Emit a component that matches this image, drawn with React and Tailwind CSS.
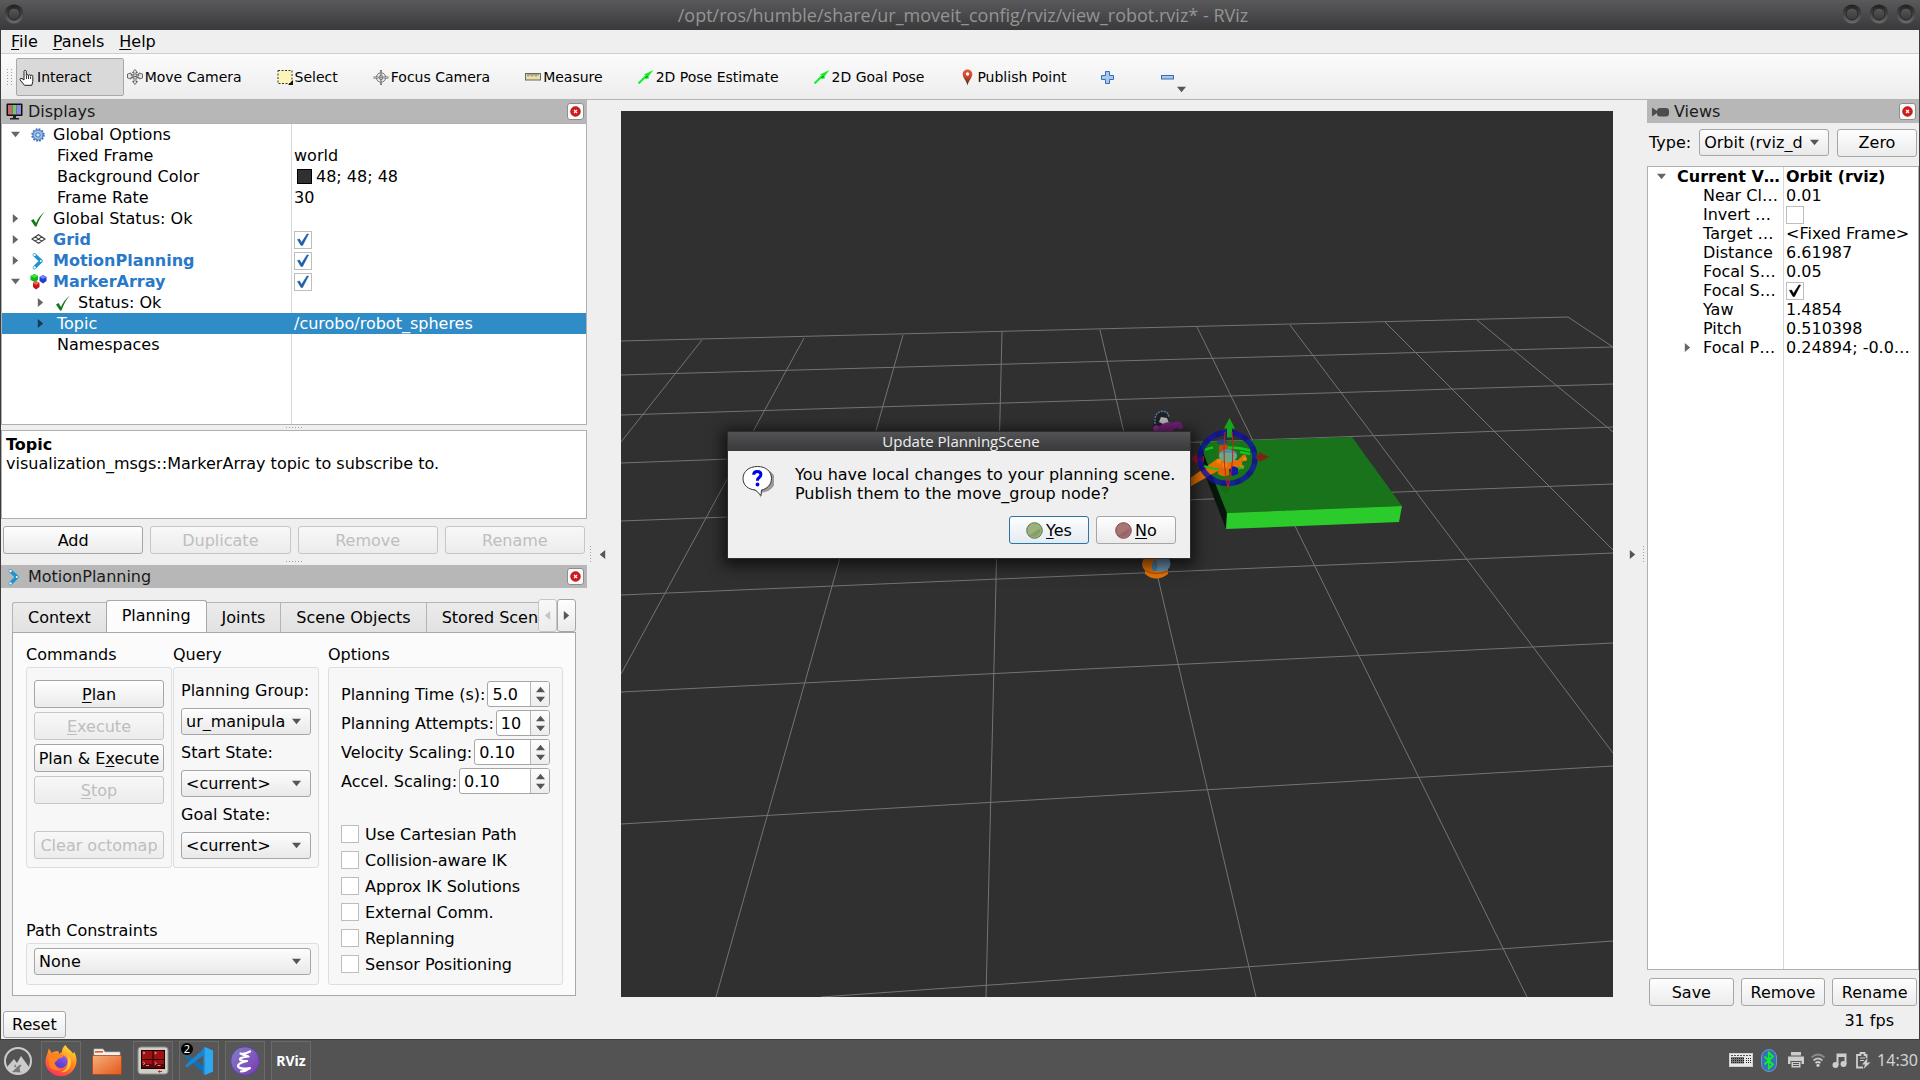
import React from "react";

const BTN =
  "flex items-center justify-center rounded-[3px] border border-[#a6a6a6] bg-linear-to-b from-[#fefefe] to-[#ebebeb] text-black whitespace-nowrap disabled:border-[#c6c6c6] disabled:from-[#f8f8f8] disabled:to-[#ececec] disabled:text-[#bebebe]";

/* ---------- small drawing helpers ---------- */

function Tri({ dir = "down", color = "#555", size = 9 }) {
  const pts = {
    down: "0,2 10,2 5,8",
    up: "0,8 10,8 5,2",
    right: "2,0 8,5 2,10",
    left: "8,0 2,5 8,10",
  }[dir];
  return (
    <svg width={size} height={size} viewBox="0 0 10 10" className="shrink-0">
      <polygon points={pts} fill={color} />
    </svg>
  );
}

function Dots({ vertical }) {
  return (
    <svg width={vertical ? 3 : 17} height={vertical ? 17 : 3}>
      {[0, 3, 6, 9, 12, 15].map((p) => (
        <rect key={p} x={vertical ? 1 : p} y={vertical ? p : 1} width="1" height="1" fill="#a0a0a0" />
      ))}
    </svg>
  );
}

const CheckMark = () => (
  <svg width="16" height="16" viewBox="0 0 16 16">
    <path d="M1 9.500 3.500 8l2.500 4Q9 5 15 0.500q-5.500 6-8.500 15H5Z" fill="#147a1a" />
  </svg>
);

const Gear = () => (
  <svg width="14" height="14" viewBox="0 0 14 14">
    <circle cx="7" cy="7" r="5.700" fill="#8fb4e3" stroke="#3d6fb5" strokeWidth="2" strokeDasharray="1.700 1.280" />
    <circle cx="7" cy="7" r="4.800" fill="#9dbfea" stroke="#4576ba" strokeWidth="0.700" />
    <circle cx="7" cy="7" r="2.200" fill="#d5e4f7" stroke="#3d6fb5" />
  </svg>
);

const GridIcon = () => (
  <svg width="15" height="15" viewBox="0 0 15 15" fill="none" stroke="#3c3c3c" strokeWidth="1.100">
    <path d="M1 7 7.500 2.700 14 7 7.500 11.300Z M4.200 4.900 10.800 9.100 M10.800 4.900 4.200 9.100" />
  </svg>
);

const Arm = () => (
  <svg width="16" height="18" viewBox="0 0 16 18">
    <path d="M4.500 3 11 9 4.500 15.500" fill="none" stroke="#1d93d2" strokeWidth="3.600" strokeLinecap="round" strokeLinejoin="round" />
    <g fill="#fff">
      <circle cx="4.500" cy="3" r="1.200" />
      <circle cx="10.800" cy="9" r="1" />
      <circle cx="4.500" cy="15.400" r="1.200" />
    </g>
  </svg>
);

const Markers = () => (
  <svg width="17" height="17" viewBox="0 0 17 17">
    <path d="M0.500 3 4.500 1l3.500 2v4L4.500 9 0.500 7Z" fill="#12b812" />
    <path d="m0.500 3 4-2 3.500 2-3.500 2Z" fill="#39e639" />
    <path d="m9.500 4 3.500-2 3.500 2v4L13 10.500 9.500 8Z" fill="#1e3fd0" />
    <path d="m9.500 4 3.500-2 3.500 2-3.500 2Z" fill="#6f8dff" />
    <path d="m3 10 3-2 3.500 2v4L6 16.500 3 14Z" fill="#c81414" />
    <path d="m3 10 3-2 3.500 2L6 12Z" fill="#f06060" />
  </svg>
);

const Monitor = () => (
  <svg width="17" height="17" viewBox="0 0 17 17">
    <rect x="0.500" y="0.500" width="16" height="12.500" rx="1" fill="#111" />
    <rect x="2" y="2" width="4.500" height="9.500" fill="#c56a6a" />
    <rect x="6.500" y="2" width="4" height="9.500" fill="#79c479" />
    <rect x="10.500" y="2" width="4.500" height="9.500" fill="#8c8ce0" />
    <path d="M7 13h3v2h3v1.500H4V15h3Z" fill="#222" />
  </svg>
);

const CameraIcon = () => (
  <svg width="17" height="10" viewBox="0 0 17 10" fill="#4c4c4c">
    <path d="M0 0.500 5 4V6L0 9.500Z" />
    <rect x="5" y="1" width="12" height="8.500" rx="3" />
  </svg>
);

const Hand = () => (
  <svg width="16" height="17" viewBox="0 0 16 17">
    <path
      d="M5 9V2.200a1.200 1.200 0 0 1 2.300 0V6.500a1 1 0 0 1 2 .2 1 1 0 0 1 2.200.3 1 1 0 0 1 2.300.5v5l-1 3.800H5.500L1 10.800Q1 8.800 3 9.500L5 11Z"
      fill="#fff"
      stroke="#222"
    />
    <path d="M7.500 7v3M9.500 7v3M11.600 7.500V10" stroke="#333" fill="none" />
  </svg>
);

const MoveCam = () => (
  <svg width="16" height="16" viewBox="0 0 16 16" fill="#e2e2e2" stroke="#5c5c5c" strokeWidth="0.900">
    <path d="M8 0.500 5.500 3.500H7V6Q5 5 4 5.500V4L0.500 5v4L4 10V8.500L7 9v3.500H5.500L8 15.500l2.500-3H9V9l3-.5V10l3.500-1V5L12 4v1.500Q11 5 9 6V3.500h1.500Z" />
    <path d="M4 6.500 12 8.500M4 8.500l8-2" fill="none" />
  </svg>
);

const SelectIcon = () => (
  <svg width="16" height="16" viewBox="0 0 16 16">
    <rect x="1" y="1.500" width="14" height="13" fill="#fdf5b8" stroke="#333" strokeDasharray="2 1.500" />
    <path d="M16 11v5h-5Z" fill="#111" />
  </svg>
);

const Focus = () => (
  <svg width="17" height="17" viewBox="0 0 17 17" fill="#eee" stroke="#6a6a6a">
    <circle cx="8.500" cy="8.500" r="5" />
    <path d="M8.500 0.500v5M8.500 11.500v5M0.500 8.500h5M11.500 8.500h5" strokeWidth="2.200" />
    <path d="M8.500 1v5M8.500 11v5M1 8.500h5M11 8.500h5" stroke="#eee" strokeWidth="0.600" />
    <circle cx="8.500" cy="8.500" r="2.200" />
    <path d="M8.500 6v5M6 8.500h5" strokeWidth="0.700" />
  </svg>
);

const Ruler = () => (
  <svg width="16" height="8" viewBox="0 0 16 8">
    <rect x="0.500" y="0.500" width="15" height="6.500" fill="#e9e0a6" stroke="#666" />
    <path d="M3 1v2.500M5 1v1.500M7 1v2.500M9 1v1.500M11 1v2.500M13 1v1.500" stroke="#666" />
  </svg>
);

const PoseArrow = () => (
  <svg width="16" height="14" viewBox="0 0 16 14">
    <path d="M0.500 13.500 8 6" stroke="#14f02a" strokeWidth="2" />
    <path d="M15.500 0 6 4.500l2 1.500-1 3 4-.5-.5-2Z" fill="#14f02a" />
    <path d="M7 7.500 9.500 5.500v2Z" fill="#0a7a12" />
  </svg>
);

const Pin = () => (
  <svg width="11" height="17" viewBox="0 0 11 17">
    <defs>
      <linearGradient id="pin" x1="0" y1="0" x2="0" y2="1">
        <stop offset="0" stopColor="#e8573c" />
        <stop offset="0.450" stopColor="#c7472c" />
        <stop offset="1" stopColor="#3a2c18" />
      </linearGradient>
    </defs>
    <path d="M5.500 0.500c3 0 4.800 2.200 4.800 4.800 0 3.500-3.500 6-4.800 11.200C4.200 11.300.7 8.800.7 5.300.7 2.700 2.500.5 5.500.5Z" fill="url(#pin)" />
    <circle cx="5.500" cy="5" r="1.700" fill="#fff" />
  </svg>
);

const Plus = () => (
  <svg width="13" height="13" viewBox="0 0 13 13">
    <path d="M4.500 0.500h4v4h4v4h-4v4h-4v-4h-4v-4h4Z" fill="#a9c8ee" stroke="#3b6cb3" />
  </svg>
);

const Minus = () => (
  <svg width="13" height="5" viewBox="0 0 13 5">
    <rect x="0.500" y="0.500" width="12" height="3.500" fill="#a9c8ee" stroke="#3b6cb3" />
  </svg>
);

/* ---------- shared controls ---------- */

function DockHeader({ icon, title }) {
  return (
    <header className="flex h-[23px] shrink-0 items-center bg-[#b7b7b7] pr-[3px] pl-[3px] text-[#1a1a1a]">
      <span className="flex w-5 justify-center">{icon}</span>
      <h2 className="ml-1 flex-1">{title}</h2>
      <button
        type="button"
        aria-label={"Close " + title}
        className="flex h-[17px] w-[17px] items-center justify-center rounded-[3px] border border-[#8e8e8e] bg-[#fafafa]"
      >
        <svg width="11" height="11" viewBox="0 0 11 11">
          <circle cx="5.500" cy="5.500" r="5" fill="#d01c1c" />
          <circle cx="5.500" cy="5.500" r="4.800" fill="none" stroke="#a81212" strokeWidth="0.600" />
          <path d="m4 4 3 3M7 4 4 7" stroke="#fff" strokeWidth="1.200" />
        </svg>
      </button>
    </header>
  );
}

function Check({ checked = false, label, color = "#1f5fa6", id }) {
  return (
    <span className="relative inline-flex h-[18px] w-[18px] shrink-0">
      <input
        id={id}
        type="checkbox"
        aria-label={label}
        defaultChecked={checked}
        className="peer h-[18px] w-[18px] appearance-none border border-[#bdbdbd] bg-white"
      />
      <svg
        viewBox="0 0 18 18"
        className="pointer-events-none absolute inset-0 hidden h-[18px] w-[18px] peer-checked:block"
      >
        <path d="m3.500 8.500 2-.5 2 3.500L13 3h1.500L8.500 14.500h-1.500Z" fill={color} stroke={color} strokeWidth="0.600" />
      </svg>
    </span>
  );
}

function Combo({ id, value, label }) {
  return (
    <span className="relative flex min-w-0 flex-1">
      <select
        id={id}
        aria-label={label}
        className="h-[27px] w-full appearance-none rounded-[3px] border border-[#a6a6a6] bg-linear-to-b from-[#fdfdfd] to-[#e9e9e9] pl-1 text-black"
      >
        <option>{value}</option>
      </select>
      <span className="pointer-events-none absolute top-[9px] right-[10px]">
        <Tri />
      </span>
    </span>
  );
}

function Spin({ label, id, value }) {
  return (
    <div className="flex h-[26px] items-center gap-[2px]">
      <label htmlFor={id} className="whitespace-nowrap">
        {label}
      </label>
      <span className="flex h-full min-w-0 flex-1 overflow-hidden rounded-[3px] border border-[#a6a6a6] bg-white">
        <input id={id} defaultValue={value} className="w-0 min-w-0 flex-1 bg-transparent pl-1 outline-none" />
        <span className="flex w-[19px] flex-col items-center justify-center gap-[1px] border-l border-[#b5b5b5] bg-linear-to-b from-[#fdfdfd] to-[#ededed]">
          <button type="button" aria-label={label + " up"} className="flex">
            <Tri dir="up" />
          </button>
          <button type="button" aria-label={label + " down"} className="flex">
            <Tri dir="down" />
          </button>
        </span>
      </span>
    </div>
  );
}

/* ---------- displays dock ---------- */

const DISPLAY_ROWS = [
  { name: "Global Options", arrow: "down", icon: <Gear /> },
  { name: "Fixed Frame", depth: 1, value: "world" },
  { name: "Background Color", depth: 1, value: "48; 48; 48", swatch: true },
  { name: "Frame Rate", depth: 1, value: "30" },
  { name: "Global Status: Ok", arrow: "right", icon: <CheckMark /> },
  { name: "Grid", arrow: "right", icon: <GridIcon />, checked: true },
  { name: "MotionPlanning", arrow: "right", icon: <Arm />, checked: true },
  { name: "MarkerArray", arrow: "down", icon: <Markers />, checked: true },
  { name: "Status: Ok", depth: 1, arrow: "right", icon: <CheckMark /> },
  { name: "Topic", depth: 1, arrow: "right", value: "/curobo/robot_spheres", selected: true },
  { name: "Namespaces", depth: 1 },
];

function DisplaysTree() {
  return (
    <div className="h-[302px] shrink-0 border border-[#b0b0b0] bg-white bg-[linear-gradient(#d8d8d8,#d8d8d8)] bg-[length:1px_100%] bg-[position:289px_0] bg-no-repeat">
      <table className="w-full table-fixed leading-[21px]">
        <colgroup>
          <col className="w-[290px]" />
          <col />
        </colgroup>
        <tbody>
          {DISPLAY_ROWS.map((r) => (
            <tr key={r.name} className={r.selected ? "bg-[#308cc6] text-white" : ""}>
              <td className="p-0">
                <div className={"flex h-[21px] items-center gap-1 " + (r.depth ? "pl-[25px]" : "")}>
                  <span className="flex w-[26px] justify-center">
                    {r.arrow && <Tri dir={r.arrow} color={r.selected ? "#153a52" : "#666"} />}
                  </span>
                  {r.icon && <span className="mr-[2px] -ml-[3px] flex w-[18px] justify-center">{r.icon}</span>}
                  <span className={r.checked ? "font-bold text-[#2a78c8]" : ""}>{r.name}</span>
                </div>
              </td>
              <td className="p-0">
                <div className="flex h-[21px] items-center pl-[2px]">
                  {r.checked && <Check checked label={r.name + " enabled"} />}
                  {r.swatch && <span className="mr-1 ml-[3px] h-[15px] w-[15px] border border-black bg-[#303030]" />}
                  {r.value}
                </div>
              </td>
            </tr>
          ))}
        </tbody>
      </table>
    </div>
  );
}

/* ---------- motion planning dock ---------- */

const COMMANDS = [
  { pre: "", key: "P", post: "lan" },
  { pre: "", key: "E", post: "xecute", off: true },
  { pre: "Plan & E", key: "x", post: "ecute" },
  { pre: "", key: "S", post: "top", off: true },
];

const GROUP = "rounded-[3px] border border-[#dedede] bg-[#f7f7f7]";

function Planning() {
  return (
    <div className="flex flex-1 gap-[9px] pt-[10px] pr-3 pb-[10px] pl-[13px]">
      <div className="flex w-[293px] shrink-0 flex-col">
        <div className="flex gap-px">
          <section className="flex-1">
            <h3 className="h-6 leading-6">Commands</h3>
            <div className={GROUP + " flex h-[201px] flex-col gap-1 px-[7px] pt-3"}>
              {COMMANDS.map((c) => (
                <button key={c.post} type="button" disabled={c.off} className={BTN + " h-7"}>
                  <span>
                    {c.pre}
                    <u className="underline-offset-2">{c.key}</u>
                    {c.post}
                  </span>
                </button>
              ))}
              <button type="button" disabled className={BTN + " mt-[23px] h-7"}>
                Clear octomap
              </button>
            </div>
          </section>
          <section className="flex-1">
            <h3 className="h-6 leading-6">Query</h3>
            <div className={GROUP + " flex h-[201px] flex-col px-[7px] pt-[5px]"}>
              {[
                ["group", "Planning Group:", "ur_manipula"],
                ["start", "Start State:", "<current>"],
                ["goal", "Goal State:", "<current>"],
              ].map(([id, label, value]) => (
                <div key={id} className="flex h-[62px] flex-col">
                  <label htmlFor={id} className="h-[35px] whitespace-nowrap leading-[35px]">
                    {label}
                  </label>
                  <Combo id={id} value={value} />
                </div>
              ))}
            </div>
          </section>
        </div>
        <div className="mt-auto">
          <label htmlFor="path" className="block h-6 leading-6">
            Path Constraints
          </label>
          <div className={GROUP + " flex h-[42px] px-[7px] pt-1"}>
            <Combo id="path" value="None" />
          </div>
        </div>
      </div>
      <section className="flex flex-1 flex-col">
        <h3 className="h-6 leading-6">Options</h3>
        <div className={GROUP + " flex flex-1 flex-col justify-between px-3 pt-[13px] pb-[7px]"}>
          <div className="flex flex-col gap-[3px]">
            <Spin id="time" label="Planning Time (s):" value="5.0" />
            <Spin id="attempts" label="Planning Attempts:" value="10" />
            <Spin id="velocity" label="Velocity Scaling:" value="0.10" />
            <Spin id="accel" label="Accel. Scaling:" value="0.10" />
          </div>
          <div className="flex flex-col">
            {[
              "Use Cartesian Path",
              "Collision-aware IK",
              "Approx IK Solutions",
              "External Comm.",
              "Replanning",
              "Sensor Positioning",
            ].map((t) => (
              <label key={t} className="flex h-[26px] items-center gap-[6px]">
                <Check />
                {t}
              </label>
            ))}
          </div>
        </div>
      </section>
    </div>
  );
}

const TAB =
  "h-[30px] shrink-0 border border-r-0 border-b-0 border-[#b4b4b4] bg-linear-to-b from-[#ebebeb] to-[#e2e2e2] px-[15px] whitespace-nowrap";

function MotionPlanning() {
  return (
    <section className="flex flex-1 flex-col">
      <DockHeader icon={<Arm />} title="MotionPlanning" />
      <div className="mr-[11px] ml-[11px] flex flex-1 flex-col pt-[11px] pb-3">
        <div className="flex h-[33px] items-end" role="tablist">
          <div className="flex min-w-0 flex-1 items-end overflow-hidden">
            <button type="button" role="tab" className={TAB + " rounded-tl-[3px]"}>
              Context
            </button>
            <button
              type="button"
              role="tab"
              aria-selected="true"
              className="h-[32px] shrink-0 rounded-t-[3px] border border-b-0 border-[#a8a8a8] bg-[#fcfcfc] px-[15px] pb-[2px] whitespace-nowrap"
            >
              Planning
            </button>
            <button type="button" role="tab" className={TAB + " border-l-0"}>
              Joints
            </button>
            <button type="button" role="tab" className={TAB}>
              Scene Objects
            </button>
            <button type="button" role="tab" className={TAB + " pr-0"}>
              Stored Scen
            </button>
          </div>
          <button type="button" aria-label="Scroll tabs left" disabled className={BTN + " h-[33px] w-[19px]"}>
            <Tri dir="left" color="#c4c4c4" />
          </button>
          <button type="button" aria-label="Scroll tabs right" className={BTN + " h-[33px] w-[19px]"}>
            <Tri dir="right" />
          </button>
        </div>
        <div className="flex flex-1 border border-[#a8a8a8] bg-[#fbfbfb]">
          <Planning />
        </div>
      </div>
    </section>
  );
}

/* ---------- 3D view ---------- */

const GRID = [
  [621, 341, 1568, 317], [621, 375, 1613, 347], [621, 415, 1613, 384], [621, 463, 1613, 427], [621, 521, 1613, 484],
  [621, 595, 1613, 553], [621, 692, 1613, 643], [621, 824, 1613, 766], [821, 997, 1613, 941],
  [702, 340, 621, 442], [804, 338, 621, 674], [903, 335, 716, 997], [1002, 332, 986, 997], [1100, 330, 1256, 997],
  [1197, 327, 1527, 997], [1290, 325, 1613, 753], [1385, 322, 1613, 550], [1477, 320, 1613, 432], [1568, 317, 1613, 347],
];

function Scene() {
  return (
    <svg
      viewBox="621 111 992 886"
      preserveAspectRatio="xMidYMid slice"
      className="h-full w-full bg-[#303030]"
      role="img"
      aria-label="Robot scene"
    >
      <g stroke="#747474" strokeWidth="1">
        {GRID.map(([a, b, c, d]) => (
          <line key={a + "-" + b + "-" + c + "-" + d} x1={a} y1={b} x2={c} y2={d} />
        ))}
      </g>
      {/* table */}
      <polygon points="1199,442 1227,513 1226,529 1207,480" fill="#06160a" />
      <polygon points="1199,442 1352,437 1402,506 1227,513" fill="#19731a" />
      <polygon points="1227,513 1402,506 1399,522 1226,529" fill="#2acb2b" />
      {/* elbow above the dialog */}
      <path d="M1153 428q0-16 8.500-16t8 16Z" fill="#222226" />
      <path d="M1155 424q-1-11 6-12.500t8 6" fill="none" stroke="#4b7c9c" strokeWidth="1.500" strokeDasharray="2 1" />
      <path d="M1159 422l2-5 6 1 2 5-4 2Z" fill="#b4b4b8" />
      <path d="M1153 433v-5q1-3.500 4-2.500l3 .5q5-5 12-3.500l6-1q5 1 5 6.500-3 3-5.500 0l-3.500 1-1 4Z" fill="#74207a" />
      <circle cx="1156" cy="428" r="2.500" fill="#8a2a8e" />
      {/* shoulder below the dialog */}
      <path d="M1145 567v7q11 9 23 0v-7Z" fill="#e87406" />
      <ellipse cx="1161" cy="563.500" rx="9.500" ry="8.500" fill="#6a93b4" />
      <ellipse cx="1150" cy="564" rx="8" ry="8" fill="#e07208" />
      <path d="M1153 571q-3-7 2-12 4 6 1 12Z" fill="#3f7fae" />
      <path d="M1146 571q10 5 22 0" fill="none" stroke="#a14c00" />
      {/* forearm */}
      <path d="M1186 481 1217 459l6 9-37 21Z" fill="#e87000" />
      {/* wrist stack */}
      <path d="M1219 446q4-5 9 0l2 10h-11Z" fill="#b34f08" />
      <ellipse cx="1222" cy="442" rx="5" ry="3" fill="#253c9c" opacity="0.800" />
      <path d="M1218 466h11v9q-5 3-11-1Z" fill="#d66805" />
      <path d="M1217 460h21l5-5q4-1 3 4l-4 3v4l-4 2q-11 3-20-1Z" fill="#e07008" />
      <circle cx="1219" cy="461" r="2.500" fill="#f5850f" />
      <circle cx="1225" cy="465" r="2.500" fill="#f5850f" />
      <circle cx="1242" cy="467" r="2" fill="#f5850f" />
      <circle cx="1245" cy="459" r="2" fill="#f5850f" />
      <ellipse cx="1228" cy="456" rx="9" ry="6.500" fill="#68a98c" />
      <path d="M1219 453q9-8 18 0Z" fill="#5b8ba0" />
      {/* interactive marker */}
      <polygon points="1191,458 1197,454 1197,456 1204,456 1204,462 1197,462 1197,464" fill="#a81313" />
      <ellipse cx="1227.500" cy="458" rx="27.500" ry="25.500" fill="none" stroke="#1414a8" strokeWidth="5.500" opacity="0.820" />
      <ellipse cx="1227.500" cy="458" rx="27.500" ry="25.500" fill="none" stroke="#12126e" strokeWidth="5.500" strokeDasharray="6 8" opacity="0.450" />
      <g fill="none" stroke="#12c41d" strokeWidth="2">
        <path d="M1205 450q4-2 8-2.500M1228 447.500q12 0 22 3M1240 452l10 2" strokeWidth="2.500" />
        <path d="M1204 466q7 3 14 3M1232 469q6 0 11-1.500" />
      </g>
      <path d="M1229.500 418 1235 428.500h-3v9h-5v-9h-3Z" fill="#15a51b" />
      <path d="m1222 487-1 2 5 5 4-5-1-2Z" fill="#126d16" />
      <path d="m1259 452 10 5-10 5v-3h-3v-4h3Z" fill="#7c2413" />
      <path d="M1229 470l4-4 5 2v6l-6 2Z" fill="#17179f" />
      <path d="M1225 432q-3 30 3 56 7-28 4-56" fill="none" stroke="#d3191b" strokeWidth="1" />
    </svg>
  );
}

/* ---------- views dock ---------- */

const VIEW_ROWS = [
  { name: "Current V…", value: "Orbit (rviz)", arrow: "down", bold: true },
  { name: "Near Cl…", value: "0.01", depth: 1 },
  { name: "Invert …", check: "off", depth: 1 },
  { name: "Target …", value: "<Fixed Frame>", depth: 1 },
  { name: "Distance", value: "6.61987", depth: 1 },
  { name: "Focal S…", value: "0.05", depth: 1 },
  { name: "Focal S…", check: "on", depth: 1 },
  { name: "Yaw", value: "1.4854", depth: 1 },
  { name: "Pitch", value: "0.510398", depth: 1 },
  { name: "Focal P…", value: "0.24894; -0.0…", depth: 1, arrow: "right" },
];

function Views() {
  return (
    <aside className="flex w-[272px] shrink-0 flex-col">
      <DockHeader icon={<CameraIcon />} title="Views" />
      <div className="flex h-[43px] shrink-0 items-center gap-2 pr-[2px] pb-[4px] pl-[2px]">
        <label htmlFor="type">Type:</label>
        <Combo id="type" value="Orbit (rviz_d" />
        <button type="button" className={BTN + " h-7 w-20"}>
          Zero
        </button>
      </div>
      <div className="flex-1 border border-[#b0b0b0] bg-white bg-[linear-gradient(#d8d8d8,#d8d8d8)] bg-[length:1px_100%] bg-[position:135px_0] bg-no-repeat">
        <table className="w-full table-fixed leading-[19px]">
          <colgroup>
            <col className="w-[136px]" />
            <col />
          </colgroup>
          <tbody>
            {VIEW_ROWS.map((r, i) => (
              <tr key={i} className={r.bold ? "font-bold" : ""}>
                <td className="p-0">
                  <div className={"flex h-[19px] items-center overflow-hidden whitespace-nowrap " + (r.depth ? "pl-[26px]" : "")}>
                    <span className="mr-[3px] flex w-[26px] shrink-0 justify-center">
                      {r.arrow && <Tri dir={r.arrow} color="#666" />}
                    </span>
                    {r.name}
                  </div>
                </td>
                <td className="p-0">
                  <div className="flex h-[19px] items-center overflow-hidden pl-[2px] whitespace-nowrap">
                    {r.check ? <Check checked={r.check === "on"} color="#000" label={r.name} /> : r.value}
                  </div>
                </td>
              </tr>
            ))}
          </tbody>
        </table>
      </div>
      <div className="flex gap-[7px] px-[2px] pt-2 pb-[2px]">
        {["Save", "Remove", "Rename"].map((t) => (
          <button key={t} type="button" className={BTN + " h-7 flex-1"}>
            {t}
          </button>
        ))}
      </div>
    </aside>
  );
}

/* ---------- dialog ---------- */

function Orb({ base, light }) {
  return (
    <svg width="17" height="17" viewBox="0 0 17 17">
      <circle cx="8.500" cy="8.500" r="7.800" fill={base} stroke={light} strokeWidth="1" />
      <path d="M3.500 13 14 6.500A6.500 6.500 0 0 1 4 13.500Z" fill={light} opacity="0.350" />
    </svg>
  );
}

function Dialog() {
  return (
    <div
      role="dialog"
      aria-labelledby="dialog-title"
      className="absolute top-[431px] left-1/2 -ml-px w-[464px] -translate-x-1/2 border border-[#2e2e2e] bg-[#efefef] shadow-[0_3px_14px_4px_rgba(0,0,0,0.65)]"
    >
      <h2
        id="dialog-title"
        className="h-[19px] bg-linear-to-b from-[#535355] to-[#39393b] pl-1 text-center font-['Open_Sans'] text-[15px] leading-[18px] text-[#efefef]"
      >
        Update PlanningScene
      </h2>
      <div className="flex gap-[21px] pt-[14px] pl-[13px]">
        <svg width="33" height="33" viewBox="0 0 33 33">
          <path d="M19 3.500a14 12 0 0 1 5 23.500l-4 1v5l-3-6A14 12 0 0 1 19 3.500Z" fill="#9a9a9a" />
          <path d="M16.500 1.500c8.500 0 14 5 14 12 0 6-4.500 10.500-10 11.500l-.5 5.500-5.500-5.500C7 24.500 2 20 2 13.500 2 6.500 8 1.500 16.500 1.500Z" fill="#fff" stroke="#333" strokeWidth="1" />
          <path d="M12.700 9.800q0-3.300 3.600-3.300t3.600 3q0 2-2 3.300-1.500 1-1.500 3" fill="none" stroke="#0000f0" strokeWidth="3" />
          <circle cx="16.500" cy="19.500" r="1.900" fill="#0000f0" />
        </svg>
        <p className="leading-[19px]">
          You have local changes to your planning scene.
          <br />
          Publish them to the move_group node?
        </p>
      </div>
      <div className="mt-[13px] flex justify-end gap-[7px] pr-[14px] pb-[14px]">
        <button
          type="button"
          className="flex h-7 w-20 items-center justify-center gap-[3px] rounded-[3px] border border-[#2b74a3] bg-linear-to-b from-[#fdfeff] to-[#e3ebf2]"
        >
          <Orb base="#9ab27f" light="#5f7a48" />
          <span>
            <u className="underline-offset-2">Y</u>es
          </span>
        </button>
        <button type="button" className={BTN + " h-7 w-20 gap-[3px]"}>
          <Orb base="#a87474" light="#7d4a4a" />
          <span>
            <u className="underline-offset-2">N</u>o
          </span>
        </button>
      </div>
    </div>
  );
}

/* ---------- window frame ---------- */

const Knob = () => (
  <svg width="20" height="20" viewBox="0 0 20 20">
    <defs>
      <linearGradient id="knob" x1="0" y1="0" x2="0" y2="1">
        <stop offset="0" stopColor="#1e1e1e" />
        <stop offset="1" stopColor="#6b6b6b" />
      </linearGradient>
      <linearGradient id="knobIn" x1="0" y1="0" x2="0" y2="1">
        <stop offset="0" stopColor="#585858" />
        <stop offset="1" stopColor="#3a3a3a" />
      </linearGradient>
    </defs>
    <circle cx="10" cy="10" r="9.500" fill="url(#knob)" />
    <circle cx="10" cy="10" r="6" fill="url(#knobIn)" stroke="#252525" strokeWidth="1" />
  </svg>
);

const TOOLS = [
  { icon: <Hand />, text: "Interact" },
  { icon: <MoveCam />, text: "Move Camera" },
  { icon: <SelectIcon />, text: "Select" },
  { icon: <Focus />, text: "Focus Camera" },
  { icon: <Ruler />, text: "Measure" },
  { icon: <PoseArrow />, text: "2D Pose Estimate" },
  { icon: <PoseArrow />, text: "2D Goal Pose" },
  { icon: <Pin />, text: "Publish Point" },
];

function Toolbar() {
  return (
    <div className="flex h-[47px] shrink-0 items-center border-t border-b border-t-[#cfcfcf] border-b-[#b4b4b4] bg-linear-to-b from-[#fbfbfb] to-[#ededed] pt-px pl-[5px] text-[14px]">
      <span className="flex w-[10px] gap-px">
        <Dots vertical />
        <Dots vertical />
      </span>
      {TOOLS.map((t, i) => (
        <button
          key={t.text}
          type="button"
          className={
            "flex h-[38px] items-center gap-[2px] rounded-[2px] border pr-[31px] pl-[2px] whitespace-nowrap " +
            (i === 0 ? "border-[#a8a8a8] bg-[#d9d9d9]" : "border-transparent")
          }
        >
          <span className="flex w-4 justify-center">{t.icon}</span>
          {t.text}
        </button>
      ))}
      <button type="button" aria-label="Add tool" className="-ml-[3px] flex h-[38px] w-6 items-center justify-center">
        <Plus />
      </button>
      <button type="button" aria-label="Remove tool" className="relative ml-9 flex h-[38px] w-6 items-center justify-center">
        <Minus />
        <span className="absolute -right-[6px] bottom-[2px]">
          <Tri />
        </span>
      </button>
    </div>
  );
}

/* ---------- taskbar ---------- */

const Firefox = () => (
  <svg width="32" height="32" viewBox="0 0 32 32">
    <defs>
      <linearGradient id="ff1" x1="0.800" y1="0" x2="0.300" y2="1">
        <stop offset="0" stopColor="#ffe63b" />
        <stop offset="0.450" stopColor="#ff8a1e" />
        <stop offset="1" stopColor="#ff2f5b" />
      </linearGradient>
      <linearGradient id="ff2" x1="0.800" y1="0" x2="0.200" y2="1">
        <stop offset="0" stopColor="#9059ff" />
        <stop offset="1" stopColor="#4a3bc0" />
      </linearGradient>
    </defs>
    <path d="M20.500 0c1 3 5 5 7.500 8.500 1-.5 1-1.500 1-2 4 7 3 14-1 19-4 5-11 7-17 5C4 28 0 22 .5 15.500 1 11 3 8 3.800 3.500 5 5 6 6.500 6.500 8c2-1.500 5-2 7-1.500L14 9l3-2c0-3 1-5 3.500-7Z" fill="url(#ff1)" />
    <circle cx="16" cy="16.500" r="6.500" fill="url(#ff2)" />
    <path d="M4 10q6-4 10-1 4-1 4.500 2.500-2 2-5 2-2 3-4.500 4.500 2 6 8 7-10 2-13-5-1-5 0-10Z" fill="#ff8122" />
    <path d="M22 9q6 5 3 13-3 6-9 5 7-2 7-10 1-4-1-8Z" fill="#ffcb2f" />
  </svg>
);

const Folder = () => (
  <svg width="32" height="30" viewBox="0 0 32 30">
    <defs>
      <linearGradient id="fold" x1="0" y1="0" x2="1" y2="1">
        <stop offset="0" stopColor="#f5b07c" />
        <stop offset="1" stopColor="#e4571b" />
      </linearGradient>
    </defs>
    <path d="M3 3h9l2 3h15v6H3Z" fill="#f3f3f3" stroke="#b5b5b5" strokeWidth="0.700" />
    <rect x="4" y="5" width="8" height="1.600" fill="#e4571b" />
    <rect x="1.500" y="9.500" width="29" height="19" rx="1" fill="url(#fold)" stroke="#b3440f" strokeWidth="0.800" />
  </svg>
);

const Terminator = () => (
  <svg width="32" height="30" viewBox="0 0 32 30">
    <rect x="1" y="1" width="30" height="27" rx="3" fill="#cfcfc8" stroke="#8e8e88" />
    <rect x="4" y="4" width="24" height="19" fill="#1a0000" />
    <path d="M5 5h10.500v8H5ZM16.500 5H27v8H16.500ZM5 14h10.500v8H5ZM16.500 14H27v8H16.500Z" fill="#a01010" />
    <path d="M5 18h10.500v4H5ZM16.500 18H27v4H16.500Z" fill="#5b0606" />
    <path d="m6 6 2 1-2 1M17.500 6l2 1-2 1M6 16l2 1.500L6 19M9 19.500h3M17.500 16l2 1.500-2 1.500M20.500 19.500h3" fill="none" stroke="#f2c4c4" strokeWidth="0.700" />
    <path d="M21 25.500h4M22.500 24.300v2.400" stroke="#e01818" />
  </svg>
);

const Code = () => (
  <svg width="30" height="30" viewBox="0 0 30 30">
    <path d="M3 8.500 1 10.500l20 18 1-7Z" fill="#1270b8" />
    <path d="M1 19.500 3 21.500 22 7.500 21 1.500Z" fill="#1a86d0" />
    <path d="m21 1 8 3.500v21L21 29Z" fill="#2fa8f0" />
    <path d="M21 1v28l-1.500-1V2Z" fill="#1f8fdb" />
  </svg>
);

const Emacs = () => (
  <svg width="30" height="30" viewBox="0 0 30 30">
    <defs>
      <linearGradient id="em" x1="0" y1="0" x2="1" y2="1">
        <stop offset="0" stopColor="#8381c5" />
        <stop offset="1" stopColor="#7e36b8" />
      </linearGradient>
    </defs>
    <circle cx="15" cy="15" r="14.300" fill="url(#em)" stroke="#54489b" />
    <path d="M20 5.500q-5 3-9.500 2 5 2.500 8 3-9 1-8.500 3 1 2 7 1.500-9 2-9 5 1.500 4 12 2-4 3-9 3.500" fill="none" stroke="#fff" strokeWidth="2.200" strokeLinecap="round" strokeLinejoin="round" />
  </svg>
);

const APP = "relative flex h-10 w-10 items-center justify-center border border-[#6a6a6a] bg-[#575757]";

function Taskbar() {
  return (
    <footer className="flex h-[41px] shrink-0 items-center justify-between bg-[#535353] font-['Noto_Sans']">
      <nav className="flex items-center gap-[6px]" aria-label="Applications">
        <button type="button" aria-label="Menu" className="flex w-[35px] justify-center">
          <svg width="28" height="28" viewBox="0 0 28 28">
            <circle cx="14" cy="14" r="13" fill="none" stroke="#cbcbcb" strokeWidth="2" />
            <path d="m3 20 7-8 3 4 4-7 8 11q-4 6.500-11 6.500T3 20Z" fill="#cbcbcb" />
            <path d="m10 20 1-3 1.500 3M8 25l5-5 3-2.500 1.500 1-2 2.500 1 4.500" fill="#535353" opacity="0.700" />
          </svg>
        </button>
        <button type="button" aria-label="Firefox" className={APP}>
          <Firefox />
        </button>
        <button type="button" aria-label="Files" className="flex h-10 w-10 items-center justify-center">
          <Folder />
        </button>
        <button type="button" aria-label="Terminal" className={APP}>
          <Terminator />
        </button>
        <button type="button" aria-label="Code" className={APP}>
          <Code />
          <span className="absolute top-[1px] left-[1px] flex h-3 w-3 items-center justify-center rounded-full bg-black text-[11px] leading-3 text-white">
            2
          </span>
        </button>
        <button type="button" aria-label="Emacs" className={APP}>
          <Emacs />
        </button>
        <button type="button" className={APP + " text-[14px] font-bold text-white"}>
          RViz
        </button>
      </nav>
      <div className="flex items-center pr-[2px] pb-px text-[#d4d4d4]">
        <svg width="24" height="14" viewBox="0 0 24 14" className="mr-2">
          <rect x="0.500" y="0.500" width="23" height="13" fill="#e8e8e8" stroke="#cfcfcf" />
          <path d="M2 2.500h20" stroke="#555" strokeDasharray="2 1" />
          <rect x="2" y="4" width="13" height="6.500" fill="#777" />
          <path d="M2 5.500h13M2 7.500h13M2 9.500h13M17 5.500h5M17 7.500h5M17 9.500h5" stroke="#222" strokeDasharray="1 1" />
        </svg>
        <svg width="16" height="23" viewBox="0 0 16 23" className="mr-[11px]">
          <rect x="0.500" y="0.500" width="15" height="22" rx="7.500" fill="#3a6fb4" stroke="#6d97cc" />
          <path d="m3.500 7.500 8.500 8-4.200 4V3.500L12 7.500l-8.500 8" fill="none" stroke="#0df02a" strokeWidth="1.800" />
        </svg>
        <svg width="16" height="16" viewBox="0 0 16 16" className="mr-[7px]" fill="#cdcdcd">
          <path d="M3 0h10v3.500H3ZM0 4.500h16V12h-2.500V9h-11v3H0ZM3.500 10h9v5.500h-9Z" />
          <path d="M5 11.500h6M5 13.500h6" stroke="#535353" />
        </svg>
        <svg width="14" height="14" viewBox="0 0 14 14" className="mr-[7px]" fill="none" strokeWidth="1.700">
          <path d="M0.500 4.500q6.500-6 13 0" stroke="#8b8b8b" />
          <path d="M2.500 7.500q4.500-4 9 0" stroke="#bdbdbd" />
          <path d="M4.500 10q2.500-2 5 0" stroke="#cdcdcd" />
          <circle cx="7" cy="12.300" r="1.600" fill="#cdcdcd" />
        </svg>
        <svg width="15" height="15" viewBox="0 0 15 15" className="mr-[9px]" fill="#cdcdcd">
          <path d="M4.500 0.500h10V11h-2V4H6.500v8h-2Z" />
          <circle cx="3.500" cy="12" r="3" />
          <circle cx="11.500" cy="11" r="3" />
        </svg>
        <svg width="15" height="17" viewBox="0 0 15 17" className="mr-[6px]">
          <path d="M10.500 6V3h-2V1h-4v2H1v12.500h6" fill="none" stroke="#cdcdcd" strokeWidth="1.800" />
          <path d="M4 6h5M4 8.500h4" stroke="#cdcdcd" />
          <path d="m11.500 6-5.500 6.500h3L7.500 17l7-6.500h-3.500Z" fill="#cdcdcd" />
        </svg>
        <time className="text-[16px]">14:30</time>
      </div>
    </footer>
  );
}

/* ---------- page ---------- */

export default function App() {
  return (
    <div className="relative flex h-screen min-h-[960px] flex-col overflow-hidden bg-[#efefef] font-['DejaVu_Sans',sans-serif] text-[16px] leading-[19px] text-black">
      <div className="flex h-[30px] shrink-0 items-center bg-linear-to-b from-[#5a5a5c] to-[#39393b] px-1 pb-[3px]">
        <button type="button" aria-label="Window menu">
          <Knob />
        </button>
        <h1 className="ml-[60px] flex-1 pt-[4px] text-center font-['Open_Sans'] text-[18px] text-[#949494]">
          /opt/ros/humble/share/ur_moveit_config/rviz/view_robot.rviz* - RViz
        </h1>
        <div className="flex gap-[7px]">
          <button type="button" aria-label="Minimize">
            <Knob />
          </button>
          <button type="button" aria-label="Maximize">
            <Knob />
          </button>
          <button type="button" aria-label="Close">
            <Knob />
          </button>
        </div>
      </div>

      <div className="flex flex-1 flex-col border-x border-b border-[#3c3c3e]">
        <nav className="flex h-[23px] shrink-0 items-center gap-[15px] pl-[10px]" aria-label="Main menu">
          {["File", "Panels", "Help"].map((m) => (
            <button key={m} type="button">
              <u className="underline-offset-2">{m[0]}</u>
              {m.slice(1)}
            </button>
          ))}
        </nav>
        <Toolbar />

        <main className="flex flex-1">
          <aside className="flex w-[586px] shrink-0 flex-col">
            <DockHeader icon={<Monitor />} title="Displays" />
            <DisplaysTree />
            <div className="flex h-[5px] shrink-0 items-center justify-center">
              <Dots />
            </div>
            <div className="h-[89px] shrink-0 border border-[#b0b0b0] bg-white px-1 pt-1">
              <p className="font-bold">Topic</p>
              <p>visualization_msgs::MarkerArray topic to subscribe to.</p>
            </div>
            <div className="flex shrink-0 gap-[7px] px-[2px] pt-[7px]">
              {["Add", "Duplicate", "Remove", "Rename"].map((t, i) => (
                <button key={t} type="button" disabled={i > 0} className={BTN + " h-7 flex-1"}>
                  {t}
                </button>
              ))}
            </div>
            <div className="flex h-[11px] shrink-0 items-center justify-center pt-1">
              <Dots />
            </div>
            <MotionPlanning />
          </aside>

          <div className="flex w-[34px] shrink-0 items-center pl-[2px]">
            <Dots vertical />
            <button type="button" aria-label="Collapse left panels" className="ml-[6px]">
              <Tri dir="left" />
            </button>
          </div>
          <div className="min-w-0 flex-1 pt-[11px] pb-[11px]">
            <Scene />
          </div>
          <div className="flex w-[34px] shrink-0 items-center justify-end pr-[2px]">
            <button type="button" aria-label="Collapse right panels" className="mr-[5px]">
              <Tri dir="right" />
            </button>
            <Dots vertical />
          </div>
          <Views />
        </main>

        <div className="flex h-[31px] shrink-0 items-center justify-between pt-px pr-[25px] pl-[2px]">
          <button type="button" className={BTN + " h-[27px] px-2"}>
            Reset
          </button>
          <span className="pb-2">31 fps</span>
        </div>
      </div>

      <Taskbar />
      <Dialog />
    </div>
  );
}
